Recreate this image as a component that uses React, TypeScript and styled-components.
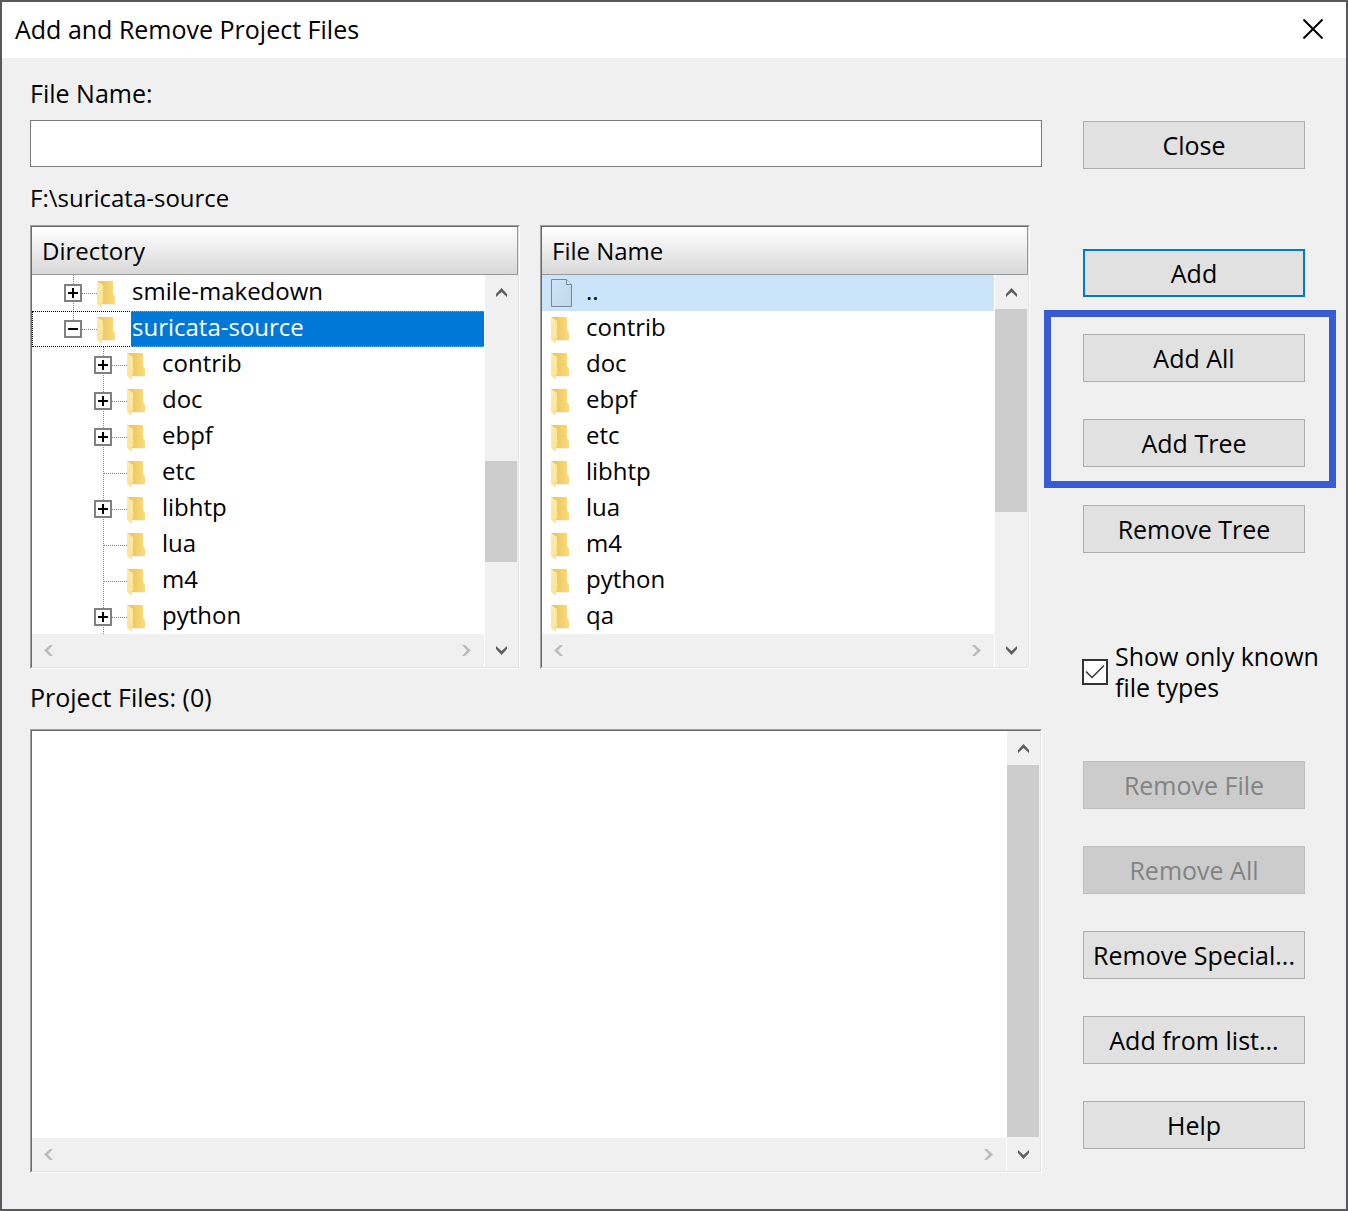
import React, { useState } from "react";
import styled, { createGlobalStyle, css } from "styled-components";

const GlobalStyle = createGlobalStyle`
  *, *::before, *::after { box-sizing: border-box; }
  body { margin: 0; background: #f0f0f0; }
  body, button, input { font-family: "Open Sans", "Noto Sans", sans-serif; font-size: 25px; line-height: 32px; color: #000; }
  svg { display: block; }
`;

const Dialog = styled.main`
  display: flex;
  flex-direction: column;
  min-height: 100vh;
  border: 2px solid #59595c;
  background: #f0f0f0;
`;

const TitleBar = styled.header`
  display: flex;
  align-items: center;
  justify-content: space-between;
  height: 56px;
  padding: 0 20px 2px 13px;
  background: #fff;
`;

const Title = styled.h1`
  margin: 0;
  font-size: 25px;
  font-weight: 400;
  line-height: 32px;
`;

const TitleClose = styled.button`
  display: grid;
  place-items: center;
  padding: 3px;
  border: 0;
  background: none;
`;

const Content = styled.div`
  flex: 1;
  display: grid;
  grid-template-columns: minmax(0, 1fr) 292px;
  gap: 2px;
  padding: 0 10px 36px 28px;
`;

const MainColumn = styled.div`
  display: flex;
  flex-direction: column;
`;

const FieldLabel = styled.label`
  margin: 19px 0 11px;
`;

const PathLabel = styled.p`
  margin: 15px 0 11px;
  font-size: 24px;
`;

const ProjectLabel = styled.h2`
  margin: 12px 0 16px;
  font-size: 25px;
  font-weight: 400;
`;

const FileInput = styled.input`
  width: 100%;
  height: 47px;
  padding: 0 8px;
  border: 1px solid #7a7a7a;
  border-radius: 0;
  background: #fff;
`;

const Lists = styled.div`
  display: grid;
  grid-template-columns: minmax(0, 1fr) minmax(0, 1fr);
  gap: 20px;
  padding-right: 12px;
  font-size: 24px;
`;

const Sunken = styled.section<{ $fill?: boolean }>`
  display: flex;
  flex-direction: column;
  height: ${(p) => (p.$fill ? "auto" : "444px")};
  flex: ${(p) => (p.$fill ? "1" : "none")};
  border: 1px solid;
  border-color: #a0a0a0 #fff #fff #a0a0a0;
  background: #fff;
`;

const SunkenInner = styled.div`
  flex: 1;
  min-height: 0;
  display: flex;
  flex-direction: column;
  border: 1px solid;
  border-color: #696969 #e3e3e3 #e3e3e3 #696969;
`;

const ColumnHeader = styled.h2`
  flex: none;
  margin: 0;
  height: 48px;
  padding: 0 10px;
  border: 1px solid #999;
  border-width: 0 1px 1px 0;
  background: linear-gradient(#fff, #d8d8d8);
  font-size: 24px;
  font-weight: 400;
  line-height: 48px;
`;

const ScrollArea = styled.div`
  flex: 1;
  min-height: 0;
  display: grid;
  grid-template: minmax(0, 1fr) 33px / minmax(0, 1fr) 33px;
  column-gap: 1px;
`;

const Viewport = styled.div`
  overflow: hidden;
`;

const VBar = styled.div`
  grid-column: 2;
  grid-row: 1 / 3;
  display: flex;
  flex-direction: column;
  background: #f0f0f0;
`;

const HBar = styled.div`
  grid-column: 1;
  grid-row: 2;
  display: flex;
  justify-content: space-between;
  padding-right: 1px;
  background: #f0f0f0;
`;

const ArrowButton = styled.button<{ $flat: boolean }>`
  flex: none;
  display: grid;
  place-items: center;
  width: 33px;
  height: ${(p) => (p.$flat ? 33 : 34)}px;
  padding: 0;
  border: 0;
  background: none;
  color: #5f5f5f;
  &:disabled { color: #bcbcbc; }
`;

const Track = styled.div`
  flex: 1;
  display: flex;
  flex-direction: column;
`;

const Segment = styled.div<{ $grow: number; $thumb?: boolean }>`
  flex: ${(p) => p.$grow} 0 0;
  margin-right: 1px;
  background: ${(p) => (p.$thumb ? "#cdcdcd" : "transparent")};
`;

const Rows = styled.ul`
  margin: 0;
  padding: 0;
  list-style: none;
`;

const TreeRow = styled.li<{ $level: number; $selected?: boolean }>`
  display: flex;
  height: 36px;
  padding-left: ${(p) => 32 + p.$level * 30}px;
  ${(p) => p.$selected && css`
    outline: 1px dotted #000;
    outline-offset: -1px;
  `}
`;

const Expander = styled.button`
  padding: 0;
  border: 0;
  background: none;
`;

const IconSlot = styled.span<{ $width: number }>`
  flex: none;
  width: ${(p) => p.$width}px;
`;

const TreeLabel = styled.span<{ $selected?: boolean }>`
  flex: 1;
  padding-left: 1px;
  line-height: 32px;
  ${(p) => p.$selected && css`
    position: relative;
    background: #0078d7;
    color: #fff;
    border: 1px dotted #ff8728;
    border-width: 1px 0;
    line-height: 30px;
  `}
`;

const FileRow = styled.li<{ $selected?: boolean }>`
  display: flex;
  height: 36px;
  padding-left: 9px;
  line-height: 32px;
  background: ${(p) => (p.$selected ? "#cce4f7" : "transparent")};
`;

const SideColumn = styled.div`
  display: flex;
  flex-direction: column;
  padding-top: 63px;
`;

const Stack = styled.div<{ $top?: number }>`
  display: flex;
  flex-direction: column;
  gap: 37px;
  margin-top: ${(p) => p.$top ?? 0}px;
  padding: 0 31px 0 39px;
`;

const Highlight = styled.div`
  display: flex;
  flex-direction: column;
  gap: 37px;
  margin-top: 13px;
  padding: 17px 24px 14px 32px;
  border: 7px solid #385ad3;
`;

const PushButton = styled.button<{ $primary?: boolean }>`
  height: 48px;
  padding: 0;
  border: ${(p) => (p.$primary ? "2px solid #0078d7" : "1px solid #adadad")};
  background: #e1e1e1;
  white-space: nowrap;
  &:disabled {
    border-color: #bfbfbf;
    background: #ccc;
    color: #838383;
  }
`;

const CheckLabel = styled.label`
  display: flex;
  align-items: center;
  gap: 7px;
  margin-top: 88px;
  padding-left: 38px;
  line-height: 31px;
  white-space: nowrap;
`;

const CheckBox = styled.span`
  flex: none;
  display: grid;
  & > * { grid-area: 1 / 1; }
`;

const CheckInput = styled.input`
  appearance: none;
  width: 26px;
  height: 26px;
  margin: 0;
  border: 2px solid #333;
  background: #fff;
  & + svg { visibility: hidden; pointer-events: none; }
  &:checked + svg { visibility: visible; }
`;

const chevrons = {
  up: "M0 6 5.500 0 11 6V9L5.500 4 0 9Z",
  down: "M0 0 5.500 5 11 0V3L5.500 9 0 3Z",
  left: "M6 0H9L4 5.500 9 11H6L0 5.500Z",
  right: "M0 0H3L9 5.500 3 11H0L5 5.500Z",
};

function Arrow({ dir, disabled }: { dir: keyof typeof chevrons; disabled?: boolean }) {
  const flat = dir === "left" || dir === "right";
  return (
    <ArrowButton type="button" $flat={flat} disabled={disabled} aria-label={`Scroll ${dir}`}>
      <svg width={flat ? 9 : 11} height={flat ? 11 : 9} fill="currentColor">
        <path d={chevrons[dir]} />
      </svg>
    </ArrowButton>
  );
}

function Scrolled({ before, thumb, after, children }: { before: number; thumb: number; after: number; children?: React.ReactNode }) {
  return (
    <ScrollArea>
      <Viewport>{children}</Viewport>
      <VBar>
        <Arrow dir="up" />
        <Track>
          <Segment $grow={before} />
          <Segment $grow={thumb} $thumb />
          <Segment $grow={after} />
        </Track>
        <Arrow dir="down" />
      </VBar>
      <HBar>
        <Arrow dir="left" disabled />
        <Arrow dir="right" disabled />
      </HBar>
    </ScrollArea>
  );
}

function FolderIcon() {
  return (
    <svg width="19" height="36" viewBox="0 0 19 36">
      <defs>
        <linearGradient id="folderBack">
          <stop offset="0.2" stopColor="#e9c661" />
          <stop offset="1" stopColor="#fbdc7a" />
        </linearGradient>
        <linearGradient id="folderFlap" x1="0" y1="0" x2="0" y2="1">
          <stop offset="0" stopColor="#ffeaa8" />
          <stop offset="1" stopColor="#fde391" />
        </linearGradient>
      </defs>
      <path d="M5 32 8 29H19L18 30H8Z" fill="#f8f2e2" />
      <path d="M0 6H16V19L18 22V29H4Z" fill="url(#folderBack)" />
      <path d="M0 6 6 10V27L5 28V33L0 29Z" fill="url(#folderFlap)" />
    </svg>
  );
}

function PageIcon() {
  return (
    <svg width="21" height="36" viewBox="0 0 21 36">
      <defs>
        <linearGradient id="page" x1="0" y1="0" x2="1" y2="1">
          <stop offset="0" stopColor="#d0e4f5" />
          <stop offset="1" stopColor="#bfd8ec" />
        </linearGradient>
      </defs>
      <path d="M.5 4.500H15.500L20.500 9.500V31.500H.5Z" fill="url(#page)" stroke="#71899d" />
      <path d="M15.500 4.500V9.500H20.500" fill="#e6f1fa" stroke="#71899d" />
    </svg>
  );
}

type Mark = "plus" | "minus" | "none";

function Branch({ mark }: { mark: Mark }) {
  return (
    <svg width="33" height="36" viewBox="0 0 33 36" shapeRendering="crispEdges">
      <path d={mark === "minus" ? "M9.500 0V10" : "M9.500 0V36"} stroke="#808080" strokeDasharray="1 1" />
      <path d="M10 18.500H33" stroke="#808080" strokeDasharray="1 1" />
      {mark !== "none" && (
        <>
          <rect x="1" y="10" width="16" height="16" fill="#fff" stroke="#808080" strokeWidth="2" />
          <path d="M4 18H14" stroke="#000" strokeWidth="2" />
          {mark === "plus" && <path d="M9 13V23" stroke="#000" strokeWidth="2" />}
        </>
      )}
    </svg>
  );
}

const tree: { name: string; level: number; mark: Mark; selected?: boolean }[] = [
  { name: "smile-makedown", level: 0, mark: "plus" },
  { name: "suricata-source", level: 0, mark: "minus", selected: true },
  { name: "contrib", level: 1, mark: "plus" },
  { name: "doc", level: 1, mark: "plus" },
  { name: "ebpf", level: 1, mark: "plus" },
  { name: "etc", level: 1, mark: "none" },
  { name: "libhtp", level: 1, mark: "plus" },
  { name: "lua", level: 1, mark: "none" },
  { name: "m4", level: 1, mark: "none" },
  { name: "python", level: 1, mark: "plus" },
];

const files = ["..", "contrib", "doc", "ebpf", "etc", "libhtp", "lua", "m4", "python", "qa"];

export default function App() {
  const [knownOnly, setKnownOnly] = useState(true);
  return (
    <>
      <GlobalStyle />
      <Dialog>
        <TitleBar>
          <Title>Add and Remove Project Files</Title>
          <TitleClose type="button" aria-label="Close dialog">
            <svg width="20" height="20" stroke="#000" strokeWidth="2">
              <path d="M.5.5 19.500 19.500M19.500.5.5 19.500" />
            </svg>
          </TitleClose>
        </TitleBar>
        <Content>
          <MainColumn>
            <FieldLabel htmlFor="file-name">File Name:</FieldLabel>
            <FileInput id="file-name" type="text" />
            <PathLabel>F:\suricata-source</PathLabel>
            <Lists>
              <Sunken>
                <SunkenInner>
                  <ColumnHeader>Directory</ColumnHeader>
                  <Scrolled before={152} thumb={101} after={71}>
                    <Rows role="tree">
                      {tree.map((n) => (
                        <TreeRow key={n.name} role="treeitem" aria-selected={!!n.selected} $level={n.level} $selected={n.selected}>
                          {n.mark === "none" ? (
                            <Branch mark="none" />
                          ) : (
                            <Expander type="button" aria-label={`Toggle ${n.name}`}>
                              <Branch mark={n.mark} />
                            </Expander>
                          )}
                          <IconSlot $width={34}><FolderIcon /></IconSlot>
                          <TreeLabel $selected={n.selected}>{n.name}</TreeLabel>
                        </TreeRow>
                      ))}
                    </Rows>
                  </Scrolled>
                </SunkenInner>
              </Sunken>
              <Sunken>
                <SunkenInner>
                  <ColumnHeader>File Name</ColumnHeader>
                  <Scrolled before={0} thumb={203} after={121}>
                    <Rows>
                      {files.map((name, i) => (
                        <FileRow key={name} $selected={i === 0}>
                          <IconSlot $width={35}>{i === 0 ? <PageIcon /> : <FolderIcon />}</IconSlot>
                          <span>{name}</span>
                        </FileRow>
                      ))}
                    </Rows>
                  </Scrolled>
                </SunkenInner>
              </Sunken>
            </Lists>
            <ProjectLabel>Project Files: (0)</ProjectLabel>
            <Sunken $fill>
              <SunkenInner>
                <Scrolled before={0} thumb={1} after={0} />
              </SunkenInner>
            </Sunken>
          </MainColumn>
          <SideColumn>
            <Stack>
              <PushButton type="button">Close</PushButton>
            </Stack>
            <Stack $top={80}>
              <PushButton type="button" $primary>Add</PushButton>
            </Stack>
            <Highlight>
              <PushButton type="button">Add All</PushButton>
              <PushButton type="button">Add Tree</PushButton>
            </Highlight>
            <Stack $top={17}>
              <PushButton type="button">Remove Tree</PushButton>
            </Stack>
            <CheckLabel>
              <CheckBox>
                <CheckInput type="checkbox" checked={knownOnly} onChange={(e) => setKnownOnly(e.target.checked)} />
                <svg width="26" height="26" fill="none" stroke="#333" strokeWidth="1.5">
                  <path d="M4 12.500 10 18.500 22 6.500" />
                </svg>
              </CheckBox>
              <span>Show only known<br />file types</span>
            </CheckLabel>
            <Stack $top={58}>
              <PushButton type="button" disabled>Remove File</PushButton>
              <PushButton type="button" disabled>Remove All</PushButton>
              <PushButton type="button">Remove Special...</PushButton>
              <PushButton type="button">Add from list...</PushButton>
              <PushButton type="button">Help</PushButton>
            </Stack>
          </SideColumn>
        </Content>
      </Dialog>
    </>
  );
}
